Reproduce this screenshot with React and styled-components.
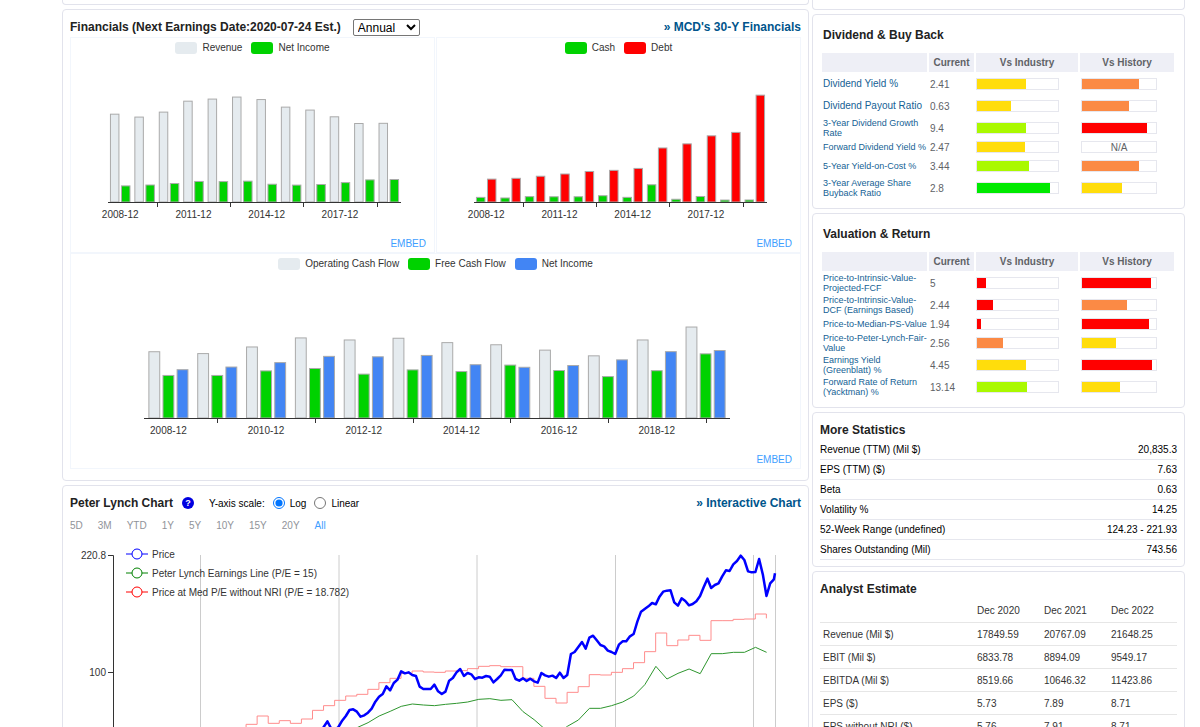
import React, { useState } from 'react'
import styled, { createGlobalStyle } from 'styled-components'

const revenue = [23522, 22745, 24075, 27006, 27567, 28106, 27441, 25413, 24622, 22820, 21025, 21077]
const netIncome = [4313, 4551, 4946, 5503, 5465, 5586, 4758, 4529, 4687, 5192, 5924, 6025]
const cash = [2063, 1796, 2387, 2336, 2336, 2799, 2078, 7686, 1223, 2464, 866, 899]
const debt = [10218, 10578, 11505, 12500, 13633, 14130, 14990, 24122, 25956, 29536, 31075, 47700]
const operatingCash = [5917, 5751, 6342, 7150, 6966, 7121, 6730, 6539, 6060, 5551, 6967, 8122]
const freeCash = [3799, 3799, 4206, 4420, 3917, 4296, 4146, 4725, 4239, 3697, 4225, 5728]

const GREY = '#e5ebef'
const GREEN = '#00d200'
const RED = '#ff0000'
const BLUE = '#4285f4'

const barColors = {
  red: '#ff0000',
  orange: '#fb8a45',
  yellow: '#ffdd0c',
  lime: '#aaf900',
  green: '#00ea00'
}

const dividendRows = [
  { name: 'Dividend Yield %', value: '2.41', industry: [60, 'yellow'], past: [77, 'orange'] },
  { name: 'Dividend Payout Ratio', value: '0.63', industry: [42, 'yellow'], past: [63, 'orange'] },
  { name: '3-Year Dividend Growth\nRate', small: true, value: '9.4', industry: [61, 'lime'], past: [88, 'red'] },
  { name: 'Forward Dividend Yield %', small: true, short: true, value: '2.47', industry: [59, 'yellow'] },
  { name: '5-Year Yield-on-Cost %', small: true, value: '3.44', industry: [64, 'lime'], past: [77, 'orange'] },
  { name: '3-Year Average Share\nBuyback Ratio', small: true, value: '2.8', industry: [90, 'green'], past: [54, 'yellow'] }
]

const valuationRows = [
  { name: 'Price-to-Intrinsic-Value-\nProjected-FCF', small: true, value: '5', industry: [11, 'red'], past: [93, 'red'] },
  { name: 'Price-to-Intrinsic-Value-\nDCF (Earnings Based)', small: true, value: '2.44', industry: [20, 'red'], past: [61, 'orange'] },
  { name: 'Price-to-Median-PS-Value', small: true, short: true, value: '1.94', industry: [5, 'red'], past: [90, 'red'] },
  { name: 'Price-to-Peter-Lynch-Fair-\nValue', small: true, value: '2.56', industry: [32, 'orange'], past: [46, 'yellow'] },
  { name: 'Earnings Yield\n(Greenblatt) %', small: true, value: '4.45', industry: [60, 'yellow'], past: [95, 'red'] },
  { name: 'Forward Rate of Return\n(Yacktman) %', small: true, value: '13.14', industry: [62, 'lime'], past: [51, 'yellow'] }
]

const statistics = [
  ['Revenue (TTM) (Mil $)', '20,835.3'],
  ['EPS (TTM) ($)', '7.63'],
  ['Beta', '0.63'],
  ['Volatility %', '14.25'],
  ['52-Week Range (undefined)', '124.23 - 221.93'],
  ['Shares Outstanding (Mil)', '743.56']
]

const estimates = [
  ['Revenue (Mil $)', '17849.59', '20767.09', '21648.25'],
  ['EBIT (Mil $)', '6833.78', '8894.09', '9549.17'],
  ['EBITDA (Mil $)', '8519.66', '10646.32', '11423.86'],
  ['EPS ($)', '5.73', '7.89', '8.71'],
  ['EPS without NRI ($)', '5.76', '7.91', '8.71']
]

const ranges = ['5D', '3M', 'YTD', '1Y', '5Y', '10Y', '15Y', '20Y', 'All']

// distances down the chart, three units to a pixel
const CHART_TOP = 225
const monthlyPrice = [
  760, 741, 724, 745, 750, 741, 722, 708, 690, 688, 695, 710, 706, 698, 686, 665, 650, 642, 619, 631,
  609, 599, 574, 580, 577, 585, 588, 620, 627, 627, 627, 614, 634, 642, 635, 602, 594, 577, 567, 588,
  579, 583, 597, 592, 593, 588, 590, 607, 597, 586, 569, 570, 570, 597, 602, 595, 603, 596, 604, 608,
  579, 586, 590, 587, 594, 578, 594, 585, 522, 516, 501, 486, 506, 473, 467, 481, 495, 499, 512, 516,
  522, 494, 484, 484, 469, 462, 425, 395, 387, 379, 369, 373, 350, 335, 332, 331, 367, 377, 355, 363,
  376, 372, 364, 348, 321, 296, 324, 315, 310, 289, 271, 273, 253, 243, 227, 240, 274, 277, 276, 237,
  283, 348, 310, 298, 280
]
const quarterlyMedian = [
  760, 733, 708, 730, 722, 730, 717, 691, 677, 661, 648, 643, 628, 608, 595, 580, 573, 576, 577, 573,
  572, 566, 559, 557, 560, 560, 595, 619, 655, 669, 637, 620, 584, 585, 577, 566, 548, 515, 459, 497,
  480, 466, 481, 422, 422, 418, 417, 402, 415
]
const quarterlyEarnings = [
  743, 728, 708, 694, 679, 672, 675, 677, 673, 670, 666, 658, 656, 661, 659, 695, 719, 748, 765, 739,
  720, 685, 685, 677, 666, 648, 614, 559, 597, 580, 567, 581, 521, 521, 517, 517, 502, 517
]

const Global = createGlobalStyle`
  * {
    box-sizing: border-box;
  }
  body {
    margin: 0;
    background: #fff;
    color: #222;
    font-family: "Liberation Sans", Arial, Helvetica, sans-serif;
    font-size: 10px;
  }
  a {
    text-decoration: none;
  }
`

function BarChart({ width, left, plot, max, step, series }) {
  const base = 148
  const scale = 112 / max
  const band = plot / 12
  const bar = (band * 0.8) / (series.length + (series.length - 1) * 0.3)
  const years = series[0].values.map((v, i) => 2008 + i)
  const labels = years.map((year, i) => ({ year, i })).filter(({ i }) => i % step === 0)

  return (
    <Chart viewBox={`0 0 ${width} 182`}>
      {series.map((s, n) => s.values.map((v, i) => (
        <rect
          key={`${n}-${i}`}
          x={left + band * i + band * 0.1 + bar * 1.3 * n}
          y={base - v * scale}
          width={bar}
          height={v * scale}
          fill={s.color}
          stroke='#aaa'
        />
      )))}
      <path d={`M${left} ${base + 0.5}h${plot}`} stroke='#333' />
      {labels.map(({ year, i }) => (
        <React.Fragment key={year}>
          <path d={`M${Math.round(left + band * (i + 0.5 + step / 2)) + 0.5} ${base}v5`} stroke='#333' />
          <text x={left + band * (i + 0.5)} y='164' textAnchor='middle'>{year}-12</text>
        </React.Fragment>
      ))}
    </Chart>
  )
}

function ChartPanel({ wide, ...chart }) {
  return (
    <Panel $wide={wide}>
      <Legend>
        {chart.series.map(s => (
          <LegendItem key={s.name}><Swatch $color={s.color} />{s.name}</LegendItem>
        ))}
      </Legend>
      <BarChart {...chart} />
      <Embed href='#embed'>EMBED</Embed>
    </Panel>
  )
}

function LynchChart() {
  const y = v => (v - CHART_TOP) / 3
  const price = monthlyPrice.map((v, i) => `${Math.min(207 + i * 3.69, 662)},${y(v)}`).join(' ')
  const earnings = quarterlyEarnings.map((v, i) => `${244 + i * 11.07},${y(v)}`).join(' ')
  const median = quarterlyMedian.map((v, i) => {
    const x = 122 + i * 11.07
    return i === 0 ? `M${x} ${y(v)}` : `H${x}V${y(v)}`
  }).join('')
  const legend = [
    ['Price', '#0000ff'],
    ['Peter Lynch Earnings Line (P/E = 15)', '#008000'],
    ['Price at Med P/E without NRI (P/E = 18.782)', '#ff0000']
  ]

  return (
    <Chart viewBox='0 0 731 220'>
      <g transform='translate(43 23)' fill='none'>
        <path d='M87.5 0v200M226 0v200M364 0v200M502.5 0v200M640.5 0v200M662.5 0v200' stroke='#ccc' />
        <path d='M-5 .5H.5V200M-5 117.5H.5' stroke='#333' />
        <path d={median} stroke='#ff8c8c' />
        <polyline points={earnings} stroke='#2e962e' />
        <polyline points={price} stroke='#0000ff' strokeWidth='2.5' strokeLinejoin='round' />
      </g>
      <text x='36' y='27' textAnchor='end'>220.8</text>
      <text x='36' y='144' textAnchor='end'>100</text>
      {legend.map(([name, color], i) => (
        <g key={name} transform={`translate(56 ${22 + i * 19})`}>
          <path d='M0 0h22' stroke={color} />
          <circle cx='11' cy='0' r='5' fill='#fff' stroke={color} />
          <text x='26' y='4'>{name}</text>
        </g>
      ))}
    </Chart>
  )
}

function Meter({ value, width }) {
  if (!value) return <MeterBox $width={width}>N/A</MeterBox>
  return (
    <MeterBox $width={width}>
      <MeterFill $color={barColors[value[1]]} style={{ width: `${value[0]}%` }} />
    </MeterBox>
  )
}

function RatingCard({ title, rows }) {
  return (
    <Card>
      <RatingTitle>{title}</RatingTitle>
      <RatingTable>
        <colgroup>
          <col />
          <col width='45' />
          <col width='102' />
          <col width='94' />
        </colgroup>
        <thead>
          <tr><th></th><th>Current</th><th>Vs Industry</th><th>Vs History</th></tr>
        </thead>
        <tbody>
          {rows.map(row => (
            <RatingRow key={row.name} $short={row.short}>
              <td><RatingLink href='#term' $small={row.small}>{row.name}</RatingLink></td>
              <td>{row.value}</td>
              <td><Meter value={row.industry} width={83} /></td>
              <td><Meter value={row.past} width={76} /></td>
            </RatingRow>
          ))}
        </tbody>
      </RatingTable>
    </Card>
  )
}

function App() {
  const [period, setPeriod] = useState('Annual')
  const [scale, setScale] = useState('log')
  const [range, setRange] = useState('All')

  return (
    <Page>
      <Global />
      <Column>
        <CardEnd $height={5} />
        <Card>
          <CardHeader $height={27}>
            <Title>Financials (Next Earnings Date:2020-07-24 Est.)</Title>
            <Select aria-label='Period' value={period} onChange={e => setPeriod(e.target.value)}>
              <option>Annual</option>
              <option>Quarterly</option>
            </Select>
            <MoreLink href='#financials'>» MCD's 30-Y Financials</MoreLink>
          </CardHeader>
          <Panels>
            <ChartPanel
              width={363} left={37} plot={293} max={30000} step={3}
              series={[{ name: 'Revenue', color: GREY, values: revenue }, { name: 'Net Income', color: GREEN, values: netIncome }]}
            />
            <ChartPanel
              width={363} left={37} plot={293} max={50000} step={3}
              series={[{ name: 'Cash', color: GREEN, values: cash }, { name: 'Debt', color: RED, values: debt }]}
            />
            <ChartPanel
              wide width={729} left={73} plot={586} max={10000} step={2}
              series={[
                { name: 'Operating Cash Flow', color: GREY, values: operatingCash },
                { name: 'Free Cash Flow', color: GREEN, values: freeCash },
                { name: 'Net Income', color: BLUE, values: netIncome }
              ]}
            />
          </Panels>
        </Card>
        <Card>
          <CardHeader $height={33}>
            <Title>Peter Lynch Chart</Title>
            <Help type='button' aria-label='Help'>?</Help>
            <Scale>
              <span>Y-axis scale:</span>
              <label>
                <Radio type='radio' name='scale' checked={scale === 'log'} onChange={() => setScale('log')} />
                Log
              </label>
              <label>
                <Radio type='radio' name='scale' checked={scale === 'linear'} onChange={() => setScale('linear')} />
                Linear
              </label>
            </Scale>
            <MoreLink href='#chart'>» Interactive Chart</MoreLink>
          </CardHeader>
          <Ranges>
            {ranges.map(r => (
              <RangeButton key={r} type='button' $active={r === range} onClick={() => setRange(r)}>{r}</RangeButton>
            ))}
          </Ranges>
          <LynchChart />
        </Card>
      </Column>

      <Column>
        <CardEnd $height={10} />
        <RatingCard title='Dividend & Buy Back' rows={dividendRows} />
        <RatingCard title='Valuation & Return' rows={valuationRows} />
        <Card>
          <ListTitle>More Statistics</ListTitle>
          <StatTable>
            <tbody>
              {statistics.map(([name, value]) => (
                <tr key={name}><td>{name}</td><td>{value}</td></tr>
              ))}
            </tbody>
          </StatTable>
        </Card>
        <Card>
          <ListTitle>Analyst Estimate</ListTitle>
          <EstimateTable>
            <colgroup>
              <col />
              <col width='67' />
              <col width='67' />
              <col width='67' />
            </colgroup>
            <thead>
              <tr><th></th><th>Dec 2020</th><th>Dec 2021</th><th>Dec 2022</th></tr>
            </thead>
            <tbody>
              {estimates.map(row => (
                <tr key={row[0]}>{row.map((cell, i) => <td key={i}>{cell}</td>)}</tr>
              ))}
            </tbody>
          </EstimateTable>
        </Card>
      </Column>
    </Page>
  )
}

export default App

const Page = styled.main`
  display: grid;
  grid-template-columns: minmax(0, 1fr) 373px;
  gap: 3px;
  height: 100vh;
  padding: 0 15px 0 62px;
  overflow: hidden;
`

const Column = styled.div`
  display: flex;
  flex-direction: column;
  gap: 4px;
`

const Card = styled.section`
  flex-shrink: 0;
  padding: 0 7px;
  border: 1px solid #e2e3ec;
  border-radius: 4px;
`

const CardEnd = styled(Card)`
  height: ${props => props.$height}px;
  border-top: 0;
  border-radius: 0 0 4px 4px;
`

const CardHeader = styled.header`
  display: flex;
  align-items: center;
  height: ${props => props.$height}px;
  padding-top: 7px;
  padding-bottom: ${props => (props.$height > 30 ? 6 : 0)}px;
`

const Title = styled.h2`
  margin: 0;
  font-size: 12px;
  line-height: 20px;
`

const MoreLink = styled.a`
  margin-left: auto;
  color: #00558c;
  font-size: 12px;
  font-weight: bold;
`

const Select = styled.select`
  width: 67px;
  height: 17px;
  margin-left: 12px;
  padding: 0;
  border: 1px solid #767676;
  border-radius: 2px;
  background: #fff;
  color: #000;
  font-family: inherit;
  font-size: 12px;
`

const Panels = styled.div`
  display: grid;
  grid-template-columns: 1fr 1fr;
  column-gap: 1px;
  padding-bottom: 11px;
`

const Panel = styled.div`
  display: flex;
  flex-direction: column;
  grid-column: ${props => (props.$wide ? '1 / -1' : 'auto')};
  padding-top: 4px;
  border: 1px solid #f2f6fc;
`

const Legend = styled.div`
  display: flex;
  justify-content: center;
  gap: 9px;
  line-height: 12px;
`

const LegendItem = styled.span`
  display: flex;
  gap: 5px;
  color: #333;
`

const Swatch = styled.i`
  width: 22px;
  height: 12px;
  border-radius: 3px;
  background: ${props => props.$color};
`

const Chart = styled.svg`
  display: block;
  width: 100%;
  height: auto;
  text {
    fill: #333;
    stroke: none;
  }
`

const Embed = styled.a`
  align-self: flex-end;
  padding-right: 8px;
  color: #409eff;
  line-height: 16px;
`

const Help = styled.button`
  width: 12px;
  height: 12px;
  margin-left: 9px;
  padding: 0;
  border: 0;
  border-radius: 50%;
  background: #0000e0;
  color: #fff;
  font: bold 9px/12px "Liberation Sans", Arial, sans-serif;
  text-align: center;
`

const Scale = styled.div`
  display: flex;
  align-items: center;
  gap: 8px;
  margin-left: 15px;
  color: #000;
  label {
    display: flex;
    align-items: center;
    gap: 5px;
  }
`

const Radio = styled.input`
  width: 12px;
  height: 12px;
  margin: 0;
`

const Ranges = styled.div`
  display: flex;
  gap: 15px;
`

const RangeButton = styled.button`
  padding: 0;
  border: 0;
  background: none;
  color: ${props => (props.$active ? '#409eff' : '#909399')};
  font-family: inherit;
  font-size: 10px;
  line-height: 13px;
`

const RatingTitle = styled(Title)`
  padding: 10px 3px 6px;
`

const RatingTable = styled.table`
  width: 356px;
  max-width: 100%;
  margin-bottom: 8px;
  border-spacing: 2px;
  table-layout: fixed;
  color: #606266;
  th {
    height: 19px;
    padding: 0;
    background: #eeeff6;
  }
  td {
    padding: 0 0 0 1px;
    white-space: nowrap;
  }
  td:nth-child(3) {
    padding-left: 0;
  }
`

const RatingRow = styled.tr`
  height: ${props => (props.$short ? 14 : 20)}px;
`

const RatingLink = styled.a`
  display: block;
  color: #155f95;
  font-size: ${props => (props.$small ? 9 : 10)}px;
  line-height: 10px;
  white-space: pre;
`

const MeterBox = styled.div`
  width: ${props => props.$width}px;
  height: 12px;
  border: 1px solid #e6e7ee;
  line-height: 11px;
  text-align: center;
`

const MeterFill = styled.div`
  height: 10px;
  background: ${props => props.$color};
`

const ListTitle = styled(Title)`
  padding-top: 7px;
`

const StatTable = styled.table`
  width: 100%;
  margin-bottom: 6px;
  border-spacing: 0;
  color: #000;
  td {
    height: 20px;
    padding: 0;
    border-bottom: 1px solid #e6e7ee;
  }
  td:last-child {
    text-align: right;
  }
`

const EstimateTable = styled.table`
  width: 100%;
  border-spacing: 0;
  table-layout: fixed;
  color: #333;
  th, td {
    height: 23px;
    padding: 0 0 0 1px;
    border-bottom: 1px solid #e6e6e6;
    font-weight: normal;
    text-align: left;
  }
  th {
    height: 24px;
  }
  td:first-child {
    padding-left: 3px;
  }
`
